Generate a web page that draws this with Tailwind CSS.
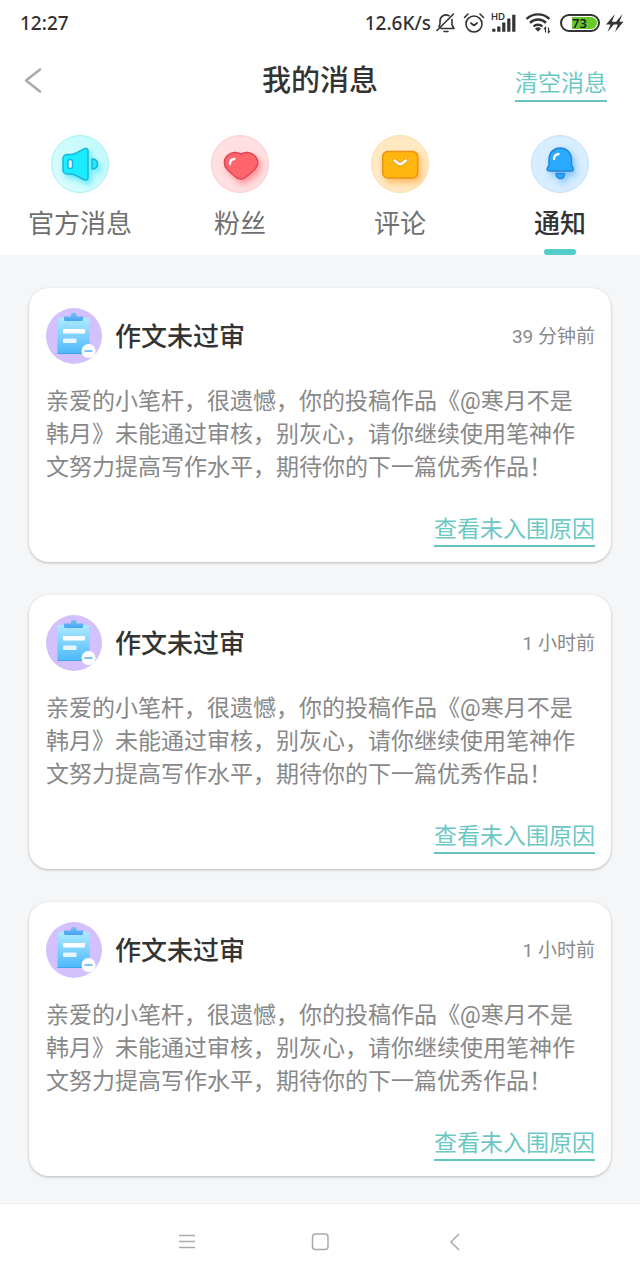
<!DOCTYPE html>
<html lang="zh-CN">
<head>
<meta charset="utf-8">
<meta name="viewport" content="width=device-width, initial-scale=1">
<title>我的消息</title>
<script src="https://cdn.jsdelivr.net/npm/@tailwindcss/browser@4"></script>
</head>
<body class="bg-[#f5f6f8] font-['Roboto','Noto_Sans_CJK_SC',sans-serif] text-[#333]">
<svg class="absolute h-0 w-0" aria-hidden="true">
  <defs>
    <linearGradient id="paper" x1="0" y1="0" x2="0" y2="1"><stop offset="0" stop-color="#aeeaff"/><stop offset="1" stop-color="#4cb8fa"/></linearGradient>
    <linearGradient id="clip" x1="0" y1="0" x2="0" y2="1"><stop offset="0" stop-color="#6cc2fb"/><stop offset="1" stop-color="#48a4f0"/></linearGradient>
    <symbol id="clipboard" viewBox="0 0 56 56">
      <circle cx="28" cy="28" r="28" fill="#d3c1fd"/>
      <rect x="11.500" y="10" width="32" height="36" rx="1" fill="url(#paper)"/>
      <path d="M11.500 45.500h32" stroke="#3fa4ee" stroke-width="1.200"/>
      <path d="M18 8.500h7V7a2 2 0 0 1 2-2h1.500a2 2 0 0 1 2 2v1.500h6.500v3a1.500 1.500 0 0 1-1.500 1.500h-16a1.500 1.500 0 0 1-1.500-1.500z" fill="url(#clip)"/>
      <rect x="17" y="21" width="22" height="4.500" rx="1" fill="#fff"/>
      <rect x="17" y="30.500" width="13.500" height="4.500" rx="1" fill="#e4f6ff"/>
      <circle cx="42.500" cy="43" r="7" fill="#fff"/>
      <path d="M38.500 43h8" stroke="#6cbcf5" stroke-width="1.800"/>
    </symbol>
    <linearGradient id="cyan" x1="1" y1="0" x2="0" y2="1"><stop offset="0" stop-color="#c0fafd"/><stop offset="1" stop-color="#dcfdfe"/></linearGradient>
  </defs>
</svg>
<div class="flex min-h-screen flex-col">
  <header class="bg-white">
    <div class="flex h-[46px] items-center justify-between pr-4 pl-5">
      <time class="font-['Noto_Sans',sans-serif] text-[19px] font-medium">12:27</time>
      <div class="flex items-center">
        <span class="font-['Noto_Sans',sans-serif] text-[19px] font-medium">12.6K/s</span>
        <svg class="ml-1 h-[22px] w-[22px]" viewBox="0 0 22 22" fill="none" stroke="#333" stroke-width="1.600" stroke-linecap="round" stroke-linejoin="round"><path d="M4 14.500 5 12V9a6 6 0 0 1 9-5.300M17 7.500V13l2 3.500H6M2 18.500 18.500 2M9 19.500h4"/></svg>
        <svg class="ml-[6px] h-[22px] w-[22px]" viewBox="0 0 22 22" fill="none" stroke="#333" stroke-width="1.600" stroke-linecap="round" stroke-linejoin="round"><circle cx="11" cy="12" r="8"/><path d="M1.500 5.500 5 2M20.500 5.500 17 2M7.800 11l3.200 2.500 3.200-2.500"/></svg>
        <div class="relative ml-[6px] h-[22px] w-[26px]">
          <span class="absolute top-0 left-0 font-['Lato',sans-serif] text-[9px] leading-[9px] font-bold">HD</span>
          <svg class="h-[22px] w-[26px]" viewBox="0 0 26 22" fill="none" stroke="#333" stroke-width="3.200"><path d="M2.800 16.800v3M7.800 14.500v5.300M12.800 10.500v9.300M17.800 6.500v13.300M22.800 2.800v17"/></svg>
        </div>
        <svg class="ml-2 h-[22px] w-[26px]" viewBox="0 0 26 22" fill="none" stroke="#333" stroke-width="2.400"><path d="M1.500 7a16.500 16.500 0 0 1 23 0M5 10.800a11.500 11.500 0 0 1 16 0M8.500 14.500a6.500 6.500 0 0 1 9 0"/><path d="m13 19.800-3-3.200a4.500 4.500 0 0 1 6 0z" fill="#333" stroke="none"/><path d="M20.500 20.500v-5l-1.500 1.500M23.500 15.500v5l1.500-1.500" stroke-width="1.200"/></svg>
        <div class="ml-[9px] flex h-[18px] w-10 rounded-full border-2 border-[#333] p-px"><div class="ml-[9px] flex flex-1 items-center rounded-r-full bg-[#66c92c] font-['Noto_Sans',sans-serif] text-[13px] leading-none font-semibold text-[#222]">73</div></div>
        <svg class="ml-1 h-[20px] w-[20px]" viewBox="0 0 20 20" fill="#333"><path d="M11 1 2 11.500h4.500L3.500 19 12 8.800H7.800zM18.500 1 9.800 11.500h4L11 19l8.500-10.200h-4.200z"/></svg>
      </div>
    </div>
    <div class="grid h-[70px] grid-cols-[1fr_auto_1fr] items-center px-[23px]">
      <button type="button" aria-label="返回" class="h-8 w-5 justify-self-start"><svg class="h-8 w-5" viewBox="0 0 20 32" fill="none" stroke="#aaa" stroke-width="2.600" stroke-linecap="round" stroke-linejoin="round"><path d="M17 4.500 3 15.500l14 11"/></svg></button>
      <h1 class="text-[29px] leading-9 font-medium">我的消息</h1>
      <button type="button" class="mr-[10px] mt-2 justify-self-end border-b-2 border-[#66c4c0] text-[23px] leading-8 text-[#6cc8c4]">清空消息</button>
    </div>
    <nav class="grid h-[139px] grid-cols-4 text-[26px] leading-9 text-[#707070]">
      <a href="#" class="flex flex-col items-center pt-[18px]">
        <svg class="mb-3 h-[60px] w-[60px]" viewBox="0 0 60 60"><circle cx="30" cy="30" r="28.500" fill="url(#cyan)" stroke="#aeeff2"/><g class="drop-shadow-[3px_4px_3px_#16dff399]" fill="#1cecff" stroke="#17b5dc" stroke-width="1.500" stroke-linejoin="round"><path d="M17 20.500h4c4 0 8-3.500 13.500-5.700 2-.8 3.500 0 3.500 2v27c0 2-1.500 2.800-3.500 2-5.500-2.300-9.500-5.800-13.500-5.800h-4a4 4 0 0 1-4-4V24.500a4 4 0 0 1 4-4z"/><path d="M42 25c3.500 0 5.500 2 5.500 5s-2 5-5.500 5z"/><rect x="18" y="25.500" width="4.500" height="9" rx="2.250" fill="#fff"/></g></svg>官方消息
      </a>
      <a href="#" class="flex flex-col items-center pt-[18px]">
        <svg class="mb-3 h-[60px] w-[60px]" viewBox="0 0 60 60"><circle cx="30" cy="30" r="28.500" fill="#ffdfe1" stroke="#facdd0"/><g class="drop-shadow-[3px_4px_3px_#ff606799]"><path d="M31 20c4-2.300 9.500-2 13.500 1.500 4.300 4.300 4.300 9.800 0 14.200l-8.500 7.300c-3.500 2.800-7 2.800-10.500 0l-8-7.300c-4.200-4.400-4.200-10 0-14.200 4-3.500 9.500-3.800 13.500-1.500z" fill="#ff656b" stroke="#dd4658" stroke-width="1.500"/><path d="M20 30c0-3.500 1.500-5 4.500-5" fill="none" stroke="#fff" stroke-width="2.300" stroke-linecap="round"/></g></svg>粉丝
      </a>
      <a href="#" class="flex flex-col items-center pt-[18px]">
        <svg class="mb-3 h-[60px] w-[60px]" viewBox="0 0 60 60"><circle cx="30" cy="30" r="28.500" fill="#ffe9c2" stroke="#fbdfb0"/><g class="drop-shadow-[3px_4px_3px_#ff9c2399]"><rect x="12.700" y="17.500" width="35" height="26.500" rx="5" fill="#ffb60e" stroke="#ee9213" stroke-width="1.500"/><path d="M24.500 26.500c2 .5 3 3.500 5.700 3.500s3.700-3 5.800-3.500" fill="none" stroke="#e89a18" stroke-width="4" stroke-linecap="round"/><path d="M24.500 26.500c2 .5 3 3.500 5.700 3.500s3.700-3 5.800-3.500" fill="none" stroke="#fff" stroke-width="2.500" stroke-linecap="round"/></g></svg>评论
      </a>
      <a href="#" aria-current="page" class="relative flex flex-col items-center pt-[18px] font-medium text-[#333]">
        <svg class="mb-3 h-[60px] w-[60px]" viewBox="0 0 60 60"><circle cx="30" cy="30" r="28.500" fill="#d8edfe" stroke="#c4e2fa"/><g class="drop-shadow-[3px_4px_3px_#2f9fff80]" fill="#2aabff" stroke="#2187dc" stroke-width="1.500" stroke-linejoin="round"><path d="M19 31v-5.500C19 18.500 24 14 30 14s11.500 4.500 11.500 11.500V31l1.500 3c1 2-.5 3-2 3H19.500c-2 0-3-1.500-2-3z"/><path d="M26 39.500h8.500c0 3-1.500 5-4 5s-4.500-2-4.500-5z"/><path d="M24 25c0-3 1.500-4.500 4.500-5" fill="none" stroke="#fff" stroke-width="2.300" stroke-linecap="round"/></g></svg>通知
        <span class="absolute bottom-0 h-[6px] w-8 rounded-full bg-[#52cdc9]"></span>
      </a>
    </nav>
  </header>

  <main class="flex flex-1 flex-col gap-[33px] px-[29px] pt-[33px] pb-[27px]">
    <article class="rounded-[20px] bg-white px-4 pt-5 pb-[15px] shadow-[0_1px_3px_#00000040]">
      <div class="flex items-center pl-px">
        <svg class="h-14 w-14" aria-hidden="true"><use href="#clipboard"/></svg>
        <h2 class="ml-[13px] flex-1 pt-px text-[26px] leading-9 font-medium">作文未过审</h2>
        <time class="pt-[2px] text-[19px] text-[#8a8a8a]">39 分钟前</time>
      </div>
      <p class="mt-[21px] px-px text-[23px] leading-[33px] text-[#888]">亲爱的小笔杆，很遗憾，你的投稿作品《@寒月不是韩月》未能通过审核，别灰心，请你继续使用笔神作文努力提高写作水平，期待你的下一篇优秀作品！</p>
      <div class="mt-[31px] flex justify-end"><a href="#" class="border-b-2 border-[#66c4c0] text-[23px] leading-[30px] text-[#6cc8c4]">查看未入围原因</a></div>
    </article>
    <article class="rounded-[20px] bg-white px-4 pt-5 pb-[15px] shadow-[0_1px_3px_#00000040]">
      <div class="flex items-center pl-px">
        <svg class="h-14 w-14" aria-hidden="true"><use href="#clipboard"/></svg>
        <h2 class="ml-[13px] flex-1 pt-px text-[26px] leading-9 font-medium">作文未过审</h2>
        <time class="pt-[2px] text-[19px] text-[#8a8a8a]">1 小时前</time>
      </div>
      <p class="mt-[21px] px-px text-[23px] leading-[33px] text-[#888]">亲爱的小笔杆，很遗憾，你的投稿作品《@寒月不是韩月》未能通过审核，别灰心，请你继续使用笔神作文努力提高写作水平，期待你的下一篇优秀作品！</p>
      <div class="mt-[31px] flex justify-end"><a href="#" class="border-b-2 border-[#66c4c0] text-[23px] leading-[30px] text-[#6cc8c4]">查看未入围原因</a></div>
    </article>
    <article class="rounded-[20px] bg-white px-4 pt-5 pb-[15px] shadow-[0_1px_3px_#00000040]">
      <div class="flex items-center pl-px">
        <svg class="h-14 w-14" aria-hidden="true"><use href="#clipboard"/></svg>
        <h2 class="ml-[13px] flex-1 pt-px text-[26px] leading-9 font-medium">作文未过审</h2>
        <time class="pt-[2px] text-[19px] text-[#8a8a8a]">1 小时前</time>
      </div>
      <p class="mt-[21px] px-px text-[23px] leading-[33px] text-[#888]">亲爱的小笔杆，很遗憾，你的投稿作品《@寒月不是韩月》未能通过审核，别灰心，请你继续使用笔神作文努力提高写作水平，期待你的下一篇优秀作品！</p>
      <div class="mt-[31px] flex justify-end"><a href="#" class="border-b-2 border-[#66c4c0] text-[23px] leading-[30px] text-[#6cc8c4]">查看未入围原因</a></div>
    </article>
  </main>

  <footer class="flex h-[77px] items-center justify-center gap-[114px] border-t border-[#eee] bg-white">
    <button type="button" aria-label="最近任务" class="h-5 w-5"><svg class="h-5 w-5" viewBox="0 0 20 20" fill="none" stroke="#aaa" stroke-width="1.500"><path d="M3 3.500h16M3 9.500h16M3 15.500h16"/></svg></button>
    <button type="button" aria-label="主屏幕" class="h-5 w-5"><svg class="h-5 w-5" viewBox="0 0 20 20" fill="none" stroke="#aaa" stroke-width="1.500"><rect x="2.500" y="2" width="15.500" height="15.500" rx="3"/></svg></button>
    <button type="button" aria-label="返回上一页" class="h-5 w-5"><svg class="h-5 w-5" viewBox="0 0 20 20" fill="none" stroke="#aaa" stroke-width="1.500"><path d="M15 2 7 10l8 8"/></svg></button>
  </footer>
</div>
</body>
</html>
